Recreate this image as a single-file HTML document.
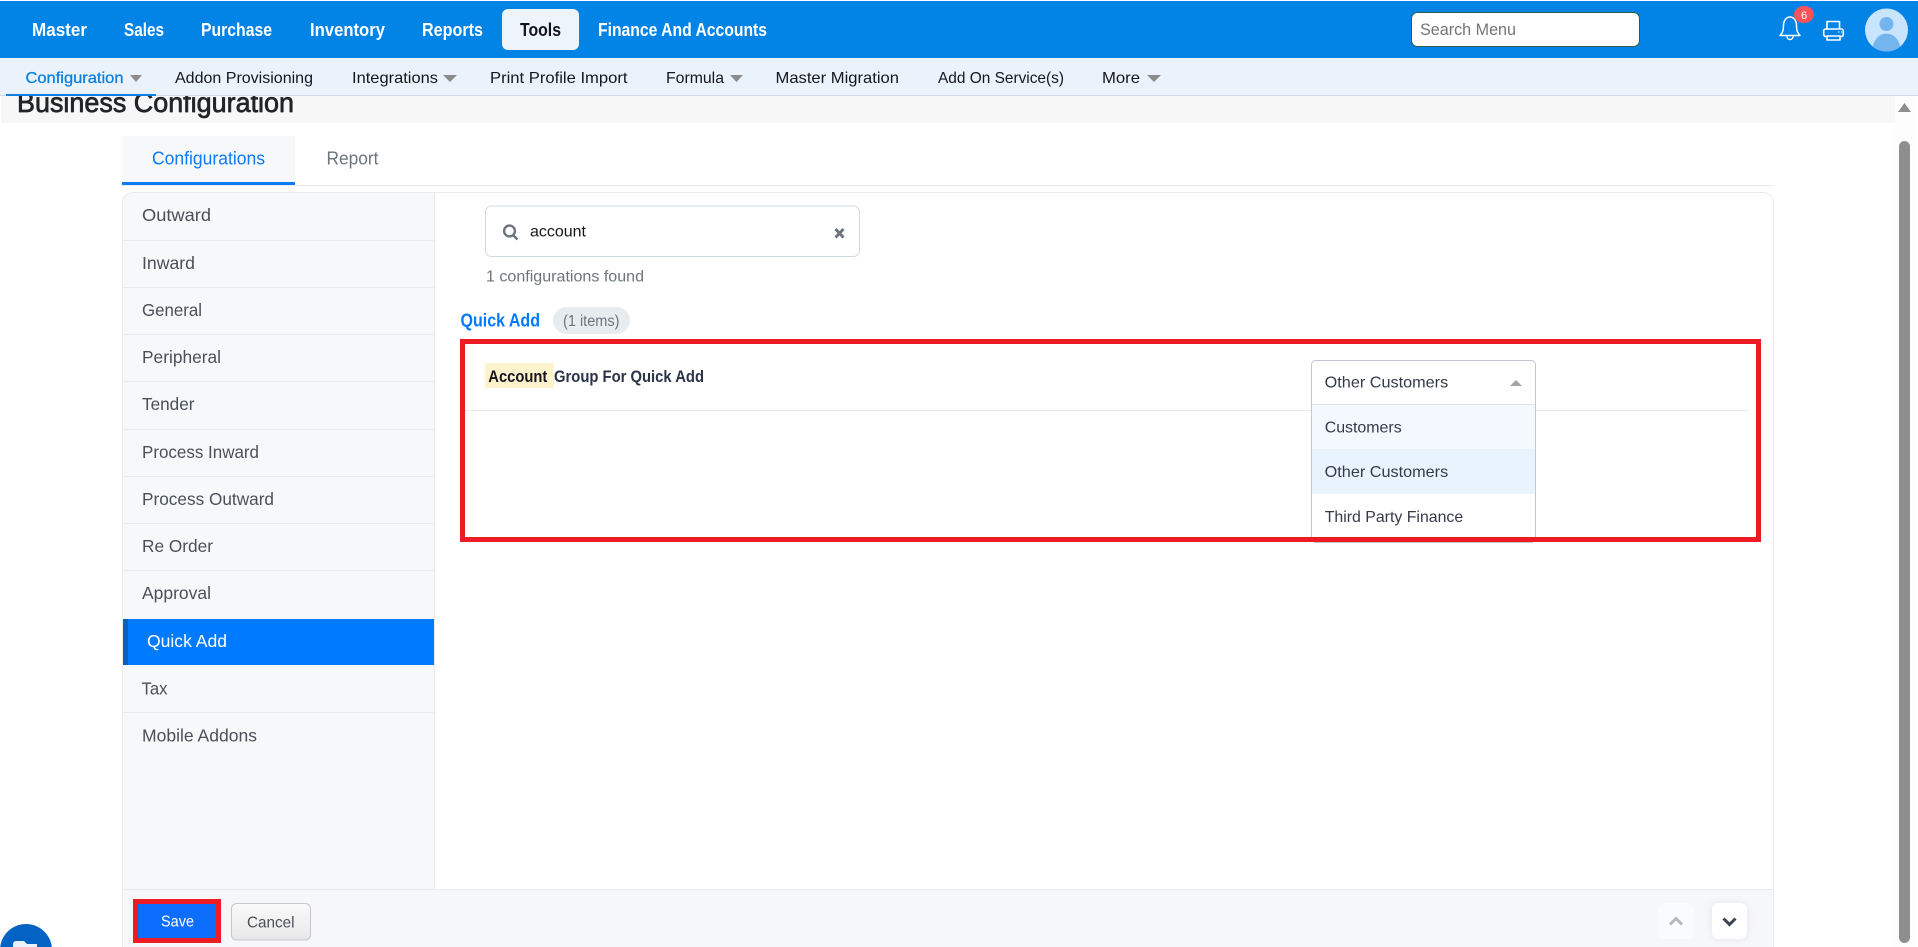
<!DOCTYPE html>
<html lang="en"><head><meta charset="utf-8"><title>Business Configuration</title>
<style>
html,body{margin:0;padding:0;background:#fff;width:1918px;height:947px;overflow:hidden}
svg{display:block}
text{font-family:"Liberation Sans",Arial,sans-serif;white-space:pre}
.n{font-size:18px;font-weight:bold;fill:#fff}
.s{font-size:16px;fill:#14171c}
.m{font-size:17.5px;fill:#495057}
.d{font-size:16px;fill:#343a4a}
</style></head><body>
<svg xmlns="http://www.w3.org/2000/svg" width="1918" height="947" viewBox="0 0 1918 947">
<rect width="1918" height="947" fill="#fff"/>
<!-- title band -->
<rect x="1" y="96" width="1894" height="27" fill="#f7f7f7"/>
<text x="17" y="112" font-size="28" fill="#212529" stroke="#212529" stroke-width=".7" textLength="277" lengthAdjust="spacingAndGlyphs">Business Configuration</text>
<!-- top nav -->
<rect y="1" width="1918" height="57" fill="#0283e6"/>
<rect x="502" y="9" width="77" height="41" rx="6" fill="#edf4fb"/>
<text class="n" x="32" y="36" textLength="55" lengthAdjust="spacingAndGlyphs">Master</text>
<text class="n" x="124" y="36" textLength="40" lengthAdjust="spacingAndGlyphs">Sales</text>
<text class="n" x="201" y="36" textLength="71" lengthAdjust="spacingAndGlyphs">Purchase</text>
<text class="n" x="310" y="36" textLength="75" lengthAdjust="spacingAndGlyphs">Inventory</text>
<text class="n" x="422" y="36" textLength="61" lengthAdjust="spacingAndGlyphs">Reports</text>
<text class="n" x="520" y="36" textLength="41" lengthAdjust="spacingAndGlyphs" style="fill:#14121f">Tools</text>
<text class="n" x="598" y="36" textLength="169" lengthAdjust="spacingAndGlyphs">Finance And Accounts</text>
<!-- top search -->
<rect x="1411.500" y="12.500" width="228" height="34" rx="6" fill="#fff" stroke="#2a5a50"/>
<text x="1420" y="35" font-size="16.500" fill="#757575" textLength="96" lengthAdjust="spacingAndGlyphs">Search Menu</text>
<!-- bell -->
<path d="M1780 35.500c3-3 3.500-6 3.500-10 0-5 3-8.500 6.500-8.500s6.500 3.500 6.500 8.500c0 4 .5 7 3.500 10z" fill="none" stroke="#fff" stroke-width="1.500" stroke-linejoin="round"/>
<path d="M1787 36.500c0 4 6 4 6 0" fill="none" stroke="#fff" stroke-width="1.500"/>
<ellipse cx="1804" cy="14.500" rx="10" ry="8.500" fill="#f8545a"/>
<text x="1804" y="19" font-size="11" fill="#fff" text-anchor="middle">6</text>
<!-- printer -->
<g fill="none" stroke="#fff" stroke-width="1.600" stroke-linejoin="round">
<path d="M1827 29v-7.500h12.500V29"/>
<rect x="1823.700" y="29" width="19.600" height="7.500" rx="2"/>
<rect x="1827" y="36" width="13" height="4" fill="#0283e6"/>
</g>
<path d="M1838 32h1.500M1841 32h1" stroke="#fff" stroke-width="1"/>
<!-- avatar -->
<defs><clipPath id="av"><circle cx="1886.500" cy="30" r="21.500"/></clipPath></defs>
<circle cx="1886.500" cy="30" r="21.500" fill="#c9e5fd"/>
<circle cx="1886.500" cy="24" r="7" fill="#74b4ef"/>
<g clip-path="url(#av)"><ellipse cx="1886.500" cy="50" rx="14" ry="16.500" fill="#74b4ef"/></g>
<!-- sub nav -->
<rect y="58" width="1918" height="37" fill="#eaf3fc"/>
<rect y="95" width="1918" height="1" fill="#cfdae8"/>
<rect x="6" y="94" width="150" height="2" fill="#0d80e2"/>
<text class="s" x="25.500" y="83" textLength="98" lengthAdjust="spacingAndGlyphs" style="fill:#0d7fdf;stroke:#0d7fdf;stroke-width:.3">Configuration</text>
<path d="M130 75h12l-6 7z" fill="#8c8c8c"/>
<text class="s" x="175" y="83" textLength="138" lengthAdjust="spacingAndGlyphs">Addon Provisioning</text>
<text class="s" x="352" y="83" textLength="86" lengthAdjust="spacingAndGlyphs">Integrations</text>
<path d="M443 75h14l-7 7z" fill="#8c8c8c"/>
<text class="s" x="490" y="83" textLength="137.500" lengthAdjust="spacingAndGlyphs">Print Profile Import</text>
<text class="s" x="666" y="83" textLength="58" lengthAdjust="spacingAndGlyphs">Formula</text>
<path d="M730 75h13l-6.500 7z" fill="#8c8c8c"/>
<text class="s" x="775.500" y="83" textLength="123.500" lengthAdjust="spacingAndGlyphs">Master Migration</text>
<text class="s" x="938" y="83" textLength="126" lengthAdjust="spacingAndGlyphs">Add On Service(s)</text>
<text class="s" x="1102" y="83" textLength="38" lengthAdjust="spacingAndGlyphs">More</text>
<path d="M1147 75h14l-7 7z" fill="#8c8c8c"/>
<!-- scrollbar -->
<rect x="1895" y="96" width="18" height="851" fill="#fdfdfd"/>
<path d="M1898 112l6.500-9 6.500 9z" fill="#8e8e8e"/>
<rect x="1899" y="141" width="11" height="802" rx="5.500" fill="#8e8e8e"/>
<!-- tabs -->
<rect x="122" y="136" width="173" height="47" fill="#f6f8fa"/>
<rect x="122" y="185" width="1652" height="1" fill="#e9ecef"/>
<rect x="122" y="182" width="173" height="3" fill="#0d7bf5"/>
<text x="152" y="164.500" font-size="18.500" fill="#0d7bf5" textLength="113" lengthAdjust="spacingAndGlyphs">Configurations</text>
<text x="326.500" y="164.500" font-size="18.500" fill="#6c757d" textLength="52" lengthAdjust="spacingAndGlyphs">Report</text>
<!-- card -->
<defs><clipPath id="card"><rect x="122" y="192" width="1652" height="770" rx="10"/></clipPath></defs>
<g clip-path="url(#card)">
<rect x="122" y="192" width="313" height="770" fill="#f7f8fa"/>
<rect x="434" y="192" width="1" height="698" fill="#e9ecef"/>
<rect x="122" y="889" width="1652" height="70" fill="#f6f7f9"/>
<rect x="122" y="889" width="1652" height="1" fill="#e9ecef"/>
<g fill="#e9ecef">
<rect x="122" y="240" width="313" height="1"/><rect x="122" y="287" width="313" height="1"/><rect x="122" y="334" width="313" height="1"/><rect x="122" y="381" width="313" height="1"/><rect x="122" y="429" width="313" height="1"/><rect x="122" y="476" width="313" height="1"/><rect x="122" y="523" width="313" height="1"/><rect x="122" y="570" width="313" height="1"/><rect x="122" y="712" width="313" height="1"/>
</g>
</g>
<rect x="122.500" y="192.500" width="1651" height="770" rx="10" fill="none" stroke="#e9ecef"/>
<!-- sidebar items -->
<text class="m" x="142" y="221" textLength="69" lengthAdjust="spacingAndGlyphs">Outward</text>
<text class="m" x="142" y="269" textLength="53" lengthAdjust="spacingAndGlyphs">Inward</text>
<text class="m" x="142" y="316" textLength="60" lengthAdjust="spacingAndGlyphs">General</text>
<text class="m" x="142" y="363" textLength="79" lengthAdjust="spacingAndGlyphs">Peripheral</text>
<text class="m" x="142" y="410" textLength="52.500" lengthAdjust="spacingAndGlyphs">Tender</text>
<text class="m" x="142" y="458" textLength="117" lengthAdjust="spacingAndGlyphs">Process Inward</text>
<text class="m" x="142" y="505" textLength="132" lengthAdjust="spacingAndGlyphs">Process Outward</text>
<text class="m" x="142" y="552" textLength="71" lengthAdjust="spacingAndGlyphs">Re Order</text>
<text class="m" x="142" y="599" textLength="69" lengthAdjust="spacingAndGlyphs">Approval</text>
<rect x="123" y="619" width="311" height="46" fill="#007bff"/>
<rect x="123" y="619" width="5" height="46" fill="#0b5fbd"/>
<text class="m" x="147" y="647" textLength="80" lengthAdjust="spacingAndGlyphs" style="fill:#fff">Quick Add</text>
<text class="m" x="141.500" y="694.500" textLength="26" lengthAdjust="spacingAndGlyphs">Tax</text>
<text class="m" x="142" y="741.500" textLength="115" lengthAdjust="spacingAndGlyphs">Mobile Addons</text>
<!-- config search -->
<rect x="485.500" y="206" width="374" height="50.500" rx="6" fill="#fff" stroke="#ccdae6"/>
<circle cx="509.500" cy="231" r="5.400" fill="none" stroke="#6c757d" stroke-width="2.400"/>
<path d="M513 235l4.500 4.500" stroke="#6c757d" stroke-width="2.600"/>
<text x="530" y="236.500" font-size="16" fill="#15181c" textLength="56" lengthAdjust="spacingAndGlyphs">account</text>
<path d="M835.500 229l8 8.500M843.500 229l-8 8.500" stroke="#6c757d" stroke-width="3"/>
<text x="486" y="281.500" font-size="16" fill="#6c757d" textLength="158" lengthAdjust="spacingAndGlyphs">1 configurations found</text>
<text x="460.500" y="326.500" font-size="18" font-weight="bold" fill="#007bff" textLength="79.500" lengthAdjust="spacingAndGlyphs">Quick Add</text>
<rect x="553" y="307" width="77" height="27" rx="13.500" fill="#e9ecef"/>
<text x="563" y="326" font-size="15.500" fill="#6c757d" textLength="56.500" lengthAdjust="spacingAndGlyphs">(1 items)</text>
<!-- row -->
<rect x="463" y="410" width="1285" height="1" fill="#e9ecef"/>
<rect x="485" y="363" width="69" height="25" fill="#fff3cd"/>
<text x="488.300" y="382" font-size="16.500" font-weight="bold" fill="#14171f" textLength="59" lengthAdjust="spacingAndGlyphs">Account</text>
<text x="554" y="382" font-size="16.500" font-weight="bold" fill="#2b3347" textLength="150" lengthAdjust="spacingAndGlyphs">Group For Quick Add</text>
<!-- dropdown -->
<rect x="1311.500" y="360.500" width="224" height="182" rx="4" fill="#fff" stroke="#c4c7d1"/>
<rect x="1312" y="404" width="223" height="45" fill="#f3f9fe"/>
<rect x="1312" y="449" width="223" height="45" fill="#e8f3fd"/>
<rect x="1312" y="404" width="223" height="1" fill="#dfe2e8"/>
<text class="d" x="1324.700" y="387.500" textLength="123.500" lengthAdjust="spacingAndGlyphs">Other Customers</text>
<path d="M1510 386l6-6 6 6z" fill="#a3a3a3"/>
<text class="d" x="1324.700" y="432.500" textLength="77" lengthAdjust="spacingAndGlyphs">Customers</text>
<text class="d" x="1324.700" y="477" textLength="123.500" lengthAdjust="spacingAndGlyphs">Other Customers</text>
<text class="d" x="1324.700" y="522" textLength="138.500" lengthAdjust="spacingAndGlyphs">Third Party Finance</text>
<!-- red highlight -->
<rect x="462.500" y="341.500" width="1296" height="198" fill="none" stroke="#ed1c24" stroke-width="5"/>
<!-- footer buttons -->
<rect x="136" y="902" width="82" height="38" fill="#0d6efd"/>
<rect x="135.500" y="901.500" width="83" height="39" fill="none" stroke="#ed1c24" stroke-width="5"/>
<text x="161" y="926.500" font-size="15.500" fill="#fff" textLength="33" lengthAdjust="spacingAndGlyphs">Save</text>
<defs><linearGradient id="cg" x1="0" y1="0" x2="0" y2="1"><stop offset="0" stop-color="#fafafa"/><stop offset="1" stop-color="#e8e8e8"/></linearGradient>
<filter id="sh" x="-40%" y="-40%" width="180%" height="180%"><feDropShadow dx="0" dy="0" stdDeviation="4" flood-color="#000" flood-opacity=".07"/></filter></defs>
<rect x="231.500" y="903.500" width="79" height="36.500" rx="5" fill="url(#cg)" stroke="#c6c6cd"/>
<text x="247" y="927.500" font-size="16" fill="#495057" textLength="47.500" lengthAdjust="spacingAndGlyphs">Cancel</text>
<rect x="1658" y="903" width="36" height="36" rx="7" fill="#fafbfc"/>
<path d="M1670 924.500l6-6 6 6" fill="none" stroke="#b6b9bf" stroke-width="3"/>
<rect x="1712" y="903" width="35" height="36" rx="7" fill="#fff" filter="url(#sh)"/>
<path d="M1723.500 918.500l6 6 6-6" fill="none" stroke="#3d4456" stroke-width="3"/>
<!-- floating chat bubble -->
<circle cx="26" cy="950" r="26" fill="#0263c4"/>
<path d="M13 947v-3a3 3 0 0 1 3-3h8l3 3h10v3z" fill="#e9f2fb"/>
</svg>
</body></html>
